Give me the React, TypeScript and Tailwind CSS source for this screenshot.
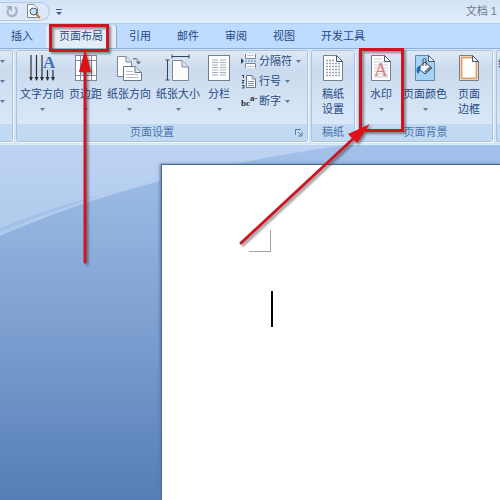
import React, { useState } from "react";

const tabs = ["插入", "页面布局", "引用", "邮件", "审阅", "视图", "开发工具"];

const Caret: React.FC = () => (
  <svg width="5" height="3" viewBox="0 0 5 3" aria-hidden="true">
    <path d="M0 0H5L2.500 3Z" fill="#5b7aa6" />
  </svg>
);

const TextDirectionIcon: React.FC = () => (
  <svg width="26" height="28" viewBox="0 0 26 28" aria-hidden="true">
    <path
      d="M2 1V26M7.500 1V26M13 1V26M18.500 16V26M24 16V26"
      stroke="#2b2f38"
      strokeWidth="1.200"
    />
    <path
      d="M0 23H4L2 27ZM5.500 23H9.500L7.500 27ZM11 23H15L13 27ZM16.500 23H20.500L18.500 27ZM22 23H26L24 27Z"
      fill="#2b2f38"
    />
    <text x="14" y="14" className="font-['Liberation_Serif',serif] text-[17px] font-bold" fill="#3b6fc0">
      A
    </text>
  </svg>
);

const MarginsIcon: React.FC = () => (
  <svg width="24" height="28" viewBox="0 0 24 28" aria-hidden="true">
    <rect x="1.500" y="1.500" width="21" height="25" fill="#fff" stroke="#7d8798" />
    <path d="M6.500 2V26M17.500 2V26M2 6.500H22M2 21.500H22" stroke="#7b8da9" />
    <path d="M8 9H16M8 12H16M8 15H16M8 18H16" stroke="#c3cbd8" />
  </svg>
);

const OrientationIcon: React.FC = () => (
  <svg width="26" height="28" viewBox="0 0 26 28" aria-hidden="true">
    <path d="M1.500 2.500H10L15.500 8V22.500H1.500Z" fill="#fdfdfe" stroke="#7d8798" />
    <path d="M10 2.500V8H15.500" fill="#dfe5ee" stroke="#7d8798" />
    <path d="M7.500 12.500H19L25.500 18.500V26.500H7.500Z" fill="#fff" stroke="#6c7687" />
    <path d="M19 12.500V18.500H25" fill="#dfe5ee" stroke="#6c7687" />
    <path d="M10 17.500H17M10 20.500H22M10 23.500H22" stroke="#b5bdc9" />
    <path d="M17 5C20 4 22 5 22.500 9M20.500 7.500L22.500 10L24.500 7.500" fill="none" stroke="#45556f" />
  </svg>
);

const SizeIcon: React.FC = () => (
  <svg width="26" height="28" viewBox="0 0 26 28" aria-hidden="true">
    <path d="M7.500 6.500H17L23.500 13V26.500H7.500Z" fill="#fcfcfd" stroke="#7d8798" />
    <path d="M17 6.500V13H23" fill="#dfe5ee" stroke="#7d8798" />
    <path d="M7 2.500H24M2.500 6V26M7 0.500V4.500M24 0.500V4.500M0.500 6H4.500M0.500 26H4.500" stroke="#35445d" />
  </svg>
);

const ColumnsIcon: React.FC = () => (
  <svg width="24" height="28" viewBox="0 0 24 28" aria-hidden="true">
    <rect x="1.500" y="1.500" width="21" height="25" fill="#fff" stroke="#727d8f" />
    <path
      d="M5 6H11M5 8.500H11M5 11H11M5 13.500H11M5 16H11M5 18.500H11M5 21H11M13 6H19M13 8.500H19M13 11H19M13 13.500H19M13 16H19M13 18.500H19M13 21H19"
      stroke="#a3adbc"
    />
  </svg>
);

const BreaksIcon: React.FC = () => (
  <svg width="17" height="16" viewBox="0 0 17 16" aria-hidden="true">
    <path d="M4.500 1V5.500H14.500V1M4.500 15V10.500H14.500V15" fill="#fff" stroke="#75849b" />
    <path d="M4 8H15" stroke="#5b82bd" strokeDasharray="2 1" />
    <path d="M0 5L3 8L0 11Z" fill="#35445d" />
    <path d="M6 2.500H13M6 13.500H13" stroke="#b5bfcd" />
  </svg>
);

const LineNumbersIcon: React.FC = () => (
  <svg width="17" height="16" viewBox="0 0 17 16" aria-hidden="true">
    <path d="M5.500 2.500H11L14.500 6V14.500H5.500Z" fill="#fff" stroke="#66748a" />
    <path d="M11 2.500V6H14M7 8.500H13M7 10.500H13M7 12.500H13" fill="none" stroke="#8491a4" />
    <path d="M1 2.500H3M2.500 2V5M1 7.500H3L1 10H3M1 12.500H3V15H1" fill="none" stroke="#35445d" />
  </svg>
);

const HyphenationIcon: React.FC = () => (
  <svg width="17" height="18" viewBox="0 0 17 18" aria-hidden="true">
    <g className="font-['Liberation_Serif',serif] text-[9px] font-bold" fill="#2b2f38">
      <text x="0" y="14">bc</text>
      <text x="9" y="9">a-</text>
    </g>
  </svg>
);

type PageIconProps = { fill: string; stroke: string; children?: React.ReactNode };

const PageIcon: React.FC<PageIconProps> = ({ fill, stroke, children }) => (
  <svg width="22" height="28" viewBox="0 0 22 28" aria-hidden="true">
    <path d="M1.500 1.500H14.500L20.500 7.500V26.500H1.500Z" fill={fill} stroke={stroke} />
    {children}
    <path d="M14.500 1.500V7.500H20.500Z" fill="#f4f7fb" stroke="#4c586b" />
  </svg>
);

const ManuscriptIcon: React.FC = () => (
  <PageIcon fill="#fff" stroke="#727d8f">
    <path
      d="M4 6.500H12M4 9.500H18M4 12.500H18M4 15.500H18M4 18.500H18M4 21.500H18"
      stroke="#97a2b3"
      strokeWidth="1.500"
      strokeDasharray="2 1"
    />
  </PageIcon>
);

const WatermarkIcon: React.FC = () => (
  <PageIcon fill="#fff" stroke="#727d8f">
    <path d="M4 5H12M4 8H18M4 11H18M4 14H18M4 17H18M4 20H18M4 23H18" stroke="#c9ced8" />
    <text x="4" y="22" className="font-['Liberation_Serif',serif] text-[19px]" fill="#d97f78">
      A
    </text>
  </PageIcon>
);

const PageColorIcon: React.FC = () => (
  <PageIcon fill="#a5d3f3" stroke="#6686a8">
    <path d="M4 14L11 8L18 14L11 20Z" fill="#f4f7fa" stroke="#3c485b" />
    <path d="M12 19L18 14L16 12L10 18Z" fill="#64758d" />
    <path d="M9 12V6C9 4 12 4 12 6V12" fill="none" stroke="#3c485b" />
    <path d="M5 12C2 13 2 18 4 20C6 18 6 15 7 13Z" fill="#2368b4" />
  </PageIcon>
);

const PageBorderIcon: React.FC = () => (
  <PageIcon fill="#fff" stroke="#727d8f">
    <path d="M14 3.500H3.500V24.500H18.500V8" fill="none" stroke="#e5a368" strokeWidth="2" />
  </PageIcon>
);

type BigButtonProps = { icon: React.ReactNode; lines: string[] };

const BigButton: React.FC<BigButtonProps> = ({ icon, lines }) => (
  <button className="flex shrink-0 flex-col items-center pt-[3px] leading-[15px] whitespace-nowrap">
    <span className="mb-[5px] flex h-7 items-center">{icon}</span>
    {lines.map((line) => (
      <span key={line}>{line}</span>
    ))}
    {lines.length === 1 && (
      <span className="flex h-[15px] items-center">
        <Caret />
      </span>
    )}
  </button>
);

const SmallButton: React.FC<{ icon: React.ReactNode; label: string }> = ({ icon, label }) => (
  <button className="flex h-5 items-center whitespace-nowrap">
    {icon}
    <span className="ml-px">{label}</span>
    <span className="ml-1">
      <Caret />
    </span>
  </button>
);

type GroupProps = {
  title?: string;
  className?: string;
  bodyClass?: string;
  launcher?: boolean;
  children: React.ReactNode;
};

const Group: React.FC<GroupProps> = ({ title, className = "", bodyClass = "", launcher, children }) => (
  <section
    className={`flex shrink-0 flex-col overflow-hidden rounded-[3px] border border-[#a9c2de] shadow-[1px_1px_0_#f2f8ff] ${className}`}
  >
    <div
      className={`flex h-[73px] items-start bg-linear-to-b from-[#dfe9f5] from-0% via-[#cbdbee] via-25% to-[#d9e8f8] to-100% ${bodyClass}`}
    >
      {children}
    </div>
    <div className="flex h-[17px] items-center bg-[#c1daf2] text-[#4a72ad]">
      <span className="flex-1 text-center whitespace-nowrap">{title}</span>
      {launcher && (
        <button aria-label={title} className="mr-1 pl-2">
          <svg width="8" height="8" viewBox="0 0 8 8" aria-hidden="true">
            <path d="M0.500 6V0.500H6M3 3L6 6M7 3V7H3" fill="none" stroke="#5b7aa6" />
          </svg>
        </button>
      )}
    </div>
  </section>
);

const App: React.FC = () => {
  const [activeTab, setActiveTab] = useState<string>("页面布局");

  return (
    <div className="relative flex min-h-screen flex-col overflow-hidden bg-[#bfdbff] font-['Liberation_Sans','Noto_Sans_CJK_SC',sans-serif] text-[11px] text-[#264a82]">
      {/* 标题栏 */}
      <header className="flex h-[23px] items-center bg-linear-to-b from-[#d2e2f6] to-[#e3eefc]">
        <div className="flex h-[19px] w-[50px] items-center gap-[6px] rounded-r-full border border-l-0 border-[#b3c8e2] bg-[#dce8f7] pl-[5px]">
          <button aria-label="撤消">
            <svg width="15" height="15" viewBox="0 0 15 15" aria-hidden="true">
              <path d="M4 4C1 8 3 12 7 12C12 12 13 6 10 3" fill="none" stroke="#a3b1c5" strokeWidth="2" />
              <path d="M1 2H7V8Z" fill="#a3b1c5" />
            </svg>
          </button>
          <button aria-label="打印预览">
            <svg width="15" height="15" viewBox="0 0 15 15" aria-hidden="true">
              <path d="M1.500 0.500H8L11.500 4V13.500H1.500Z" fill="#fff" stroke="#7d8798" />
              <circle cx="7.500" cy="7.500" r="3.500" fill="#c8e2f7" stroke="#44536b" />
              <path d="M10 10L14 14" stroke="#b9803a" strokeWidth="2" />
            </svg>
          </button>
        </div>
        <button aria-label="自定义快速访问工具栏" className="ml-[6px]">
          <svg width="6" height="6" viewBox="0 0 6 6" aria-hidden="true">
            <path d="M0 0H6V1H0ZM0 3H6L3 6Z" fill="#3f5f8f" />
          </svg>
        </button>
        <h1 className="ml-auto pr-[3px] text-[#69788c]">文档 1</h1>
      </header>

      {/* 选项卡 */}
      <nav className="flex h-[25px] items-end border-t border-[#b3cdee] bg-[#bfdbff] pr-2">
        {tabs.map((tab, i) => (
          <button
            key={tab}
            onClick={() => setActiveTab(tab)}
            className={`h-[23px] shrink-0 rounded-t-[3px] pr-[13px] whitespace-nowrap ${
              i === 0 ? "pl-[11px]" : "pl-[13px]"
            } ${activeTab === tab ? "bg-[#e3edf8] shadow-[1px_0_1px_#8aa9d0]" : ""}`}
          >
            {tab}
          </button>
        ))}
      </nav>

      {/* 功能区 */}
      <div className="flex gap-[3px] overflow-hidden border-t border-b border-[#8fb0d8] border-b-[#d9f2fa] bg-[#d5e4f5] pt-px pb-[2px]">
        <Group className="w-[13px] rounded-l-none border-l-0" bodyClass="flex-col">
          {["主题颜色", "主题字体", "主题效果"].map((name) => (
            <button key={name} aria-label={name} className="flex h-5 items-center">
              <Caret />
            </button>
          ))}
        </Group>
        <Group title="页面设置" launcher bodyClass="gap-[5px] pr-[6px] pl-[3px]">
          <BigButton icon={<TextDirectionIcon />} lines={["文字方向"]} />
          <BigButton icon={<MarginsIcon />} lines={["页边距"]} />
          <BigButton icon={<OrientationIcon />} lines={["纸张方向"]} />
          <BigButton icon={<SizeIcon />} lines={["纸张大小"]} />
          <div className="flex pr-[5px] pl-[2px]">
            <BigButton icon={<ColumnsIcon />} lines={["分栏"]} />
          </div>
          <div className="flex flex-col">
            <SmallButton icon={<BreaksIcon />} label="分隔符" />
            <SmallButton icon={<LineNumbersIcon />} label="行号" />
            <SmallButton icon={<HyphenationIcon />} label="断字" />
          </div>
        </Group>
        <Group title="稿纸" bodyClass="px-[10px]">
          <BigButton icon={<ManuscriptIcon />} lines={["稿纸", "设置"]} />
        </Group>
        <Group title="页面背景" bodyClass="gap-[11px] pr-3 pl-[11px]">
          <BigButton icon={<WatermarkIcon />} lines={["水印"]} />
          <BigButton icon={<PageColorIcon />} lines={["页面颜色"]} />
          <BigButton icon={<PageBorderIcon />} lines={["页面", "边框"]} />
        </Group>
        <Group className="min-w-0 flex-1 rounded-r-none border-r-0" bodyClass="pt-1 pl-px">
          <span className="whitespace-nowrap">缩进</span>
        </Group>
      </div>

      {/* 文档区 */}
      <main className="relative flex flex-1 bg-linear-to-b from-[#a3c1ea] via-[#82a4d4] via-45% to-[#557eb6] pt-[19px] pl-[161px]">
        <svg
          className="absolute inset-0 h-full w-full"
          viewBox="0 0 500 355"
          preserveAspectRatio="none"
          aria-hidden="true"
        >
          <defs>
            <linearGradient id="swoosh" x1="0" y1="0" x2="0" y2="1">
              <stop offset="0" stopColor="#bed3f2" />
              <stop offset="1" stopColor="#aecaec" />
            </linearGradient>
          </defs>
          <path d="M0 0H345Q235 16 160 36Q75 58 0 91Z" fill="url(#swoosh)" />
          <path d="M0 83Q50 63 100 50L90 54Q45 69 0 87Z" fill="#a4c0e6" />
        </svg>
        <div className="relative flex-1 border-t border-l border-[#56667e] bg-white pt-[65px] pl-[87px] shadow-[-1px_0_3px_#5479ae]">
          <div className="h-[22px] w-[22px] border-r border-b border-[#a3a3a3]" />
          <div
            role="textbox"
            aria-label="正文"
            tabIndex={0}
            className="mt-[39px] ml-[22px] h-9 border-l-2 border-black outline-none"
          />
        </div>
      </main>

      {/* 红色标注 */}
      <svg
        className="pointer-events-none absolute top-0 left-0 drop-shadow-[2px_2px_1px_rgba(40,40,40,0.5)]"
        width="500"
        height="300"
        viewBox="0 0 500 300"
        aria-hidden="true"
      >
        <g fill="none" stroke="#cf1620" strokeWidth="3">
          <rect x="50.500" y="25.500" width="57" height="25" />
          <rect x="360.500" y="49.500" width="42" height="81" />
          <path d="M85 262V70M241 243L354 138" strokeLinecap="round" />
        </g>
        <path d="M85 49L91 72H79ZM370 124L357 143L348 134Z" fill="#e01018" />
      </svg>
    </div>
  );
};

export default App;
